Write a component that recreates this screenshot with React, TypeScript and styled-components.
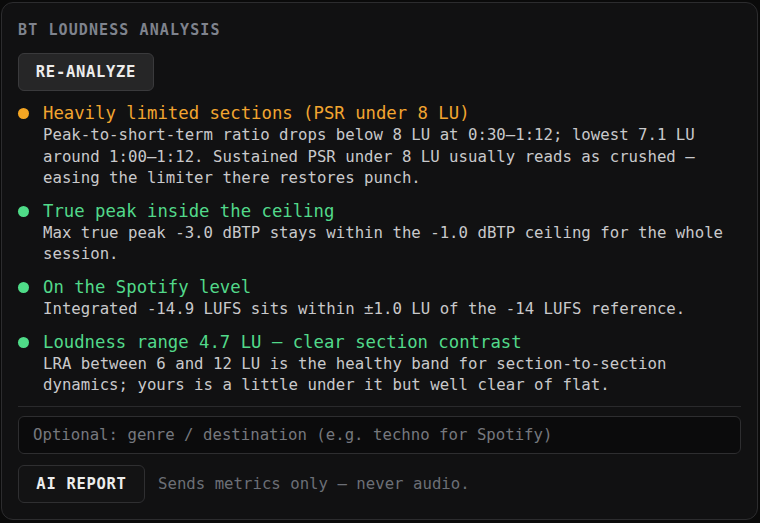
import React from "react";
import styled, { createGlobalStyle } from "styled-components";

const Global = createGlobalStyle`
  html, body { margin: 0; padding: 0; background: #0a0a0a; }
  body { font-family: "DejaVu Sans Mono", "Liberation Mono", monospace; }
  * { box-sizing: border-box; }
`;

const Panel = styled.div`
  margin: 2px 2px 3px 1px;
  width: 757px;
  height: 518px;
  border: 1px solid #2c2c2e;
  border-radius: 12px;
  background: #111112;
  padding: 18px 16px 0 16px;
  display: flex;
  flex-direction: column;
  overflow: hidden;
`;

const Title = styled.div`
  font-size: 15px;
  line-height: 18px;
  letter-spacing: 1.1px;
  color: #7f838d;
  font-weight: bold;
`;

const Button = styled.button<{ $dark?: boolean; $width: number }>`
  align-self: flex-start;
  width: ${(p) => p.$width}px;
  height: 38px;
  padding: 0;
  white-space: nowrap;
  border-radius: 6px;
  border: 1px solid ${(p) => (p.$dark ? "#2f2f31" : "#3a3a3c")};
  background: ${(p) => (p.$dark ? "#131314" : "#262627")};
  color: #ececec;
  font-family: "DejaVu Sans Mono", monospace;
  font-weight: bold;
  font-size: 15.5px;
  letter-spacing: 0.7px;
  cursor: pointer;
`;

const TopButton = styled(Button)`
  margin-top: 14px;
`;

const List = styled.div`
  margin-top: 11px;
  display: flex;
  flex-direction: column;
  gap: 11px;
`;

const Item = styled.div`
  display: grid;
  grid-template-columns: 25px 1fr;
`;

const Dot = styled.span<{ $color: string }>`
  width: 11px;
  height: 11px;
  border-radius: 50%;
  background: ${(p) => p.$color};
  margin: 6px 0 0 0;
`;

const Heading = styled.div<{ $color: string }>`
  font-size: 17.3px;
  line-height: 22px;
  color: ${(p) => p.$color};
`;

const Body = styled.div`
  grid-column: 2;
  font-size: 15.7px;
  line-height: 21.6px;
  color: #c9c9cb;
`;

const Separator = styled.div`
  margin-top: 10px;
  height: 1px;
  background: #2a2a2c;
`;

const Input = styled.input`
  margin-top: 9px;
  height: 38px;
  width: 100%;
  border: 1px solid #2e2e30;
  border-radius: 6px;
  background: #0b0b0c;
  padding: 0 14px;
  font-family: "DejaVu Sans Mono", monospace;
  font-size: 15.7px;
  color: #ddd;
  outline: none;
  &::placeholder { color: #76787e; }
`;

const Footer = styled.div`
  margin-top: 11px;
  display: flex;
  align-items: center;
  gap: 13px;
`;

const Note = styled.span`
  font-size: 15.7px;
  color: #6c6f76;
`;

const ORANGE = "#f2a530";
const GREEN = "#52d98a";

const items = [
  {
    color: ORANGE,
    dot: "#f5a623",
    title: "Heavily limited sections (PSR under 8 LU)",
    body: "Peak-to-short-term ratio drops below 8 LU at 0:30–1:12; lowest 7.1 LU around 1:00–1:12. Sustained PSR under 8 LU usually reads as crushed — easing the limiter there restores punch.",
  },
  {
    color: GREEN,
    dot: "#4fdc88",
    title: "True peak inside the ceiling",
    body: "Max true peak -3.0 dBTP stays within the -1.0 dBTP ceiling for the whole session.",
  },
  {
    color: GREEN,
    dot: "#4fdc88",
    title: "On the Spotify level",
    body: "Integrated -14.9 LUFS sits within ±1.0 LU of the -14 LUFS reference.",
  },
  {
    color: GREEN,
    dot: "#4fdc88",
    title: "Loudness range 4.7 LU — clear section contrast",
    body: "LRA between 6 and 12 LU is the healthy band for section-to-section dynamics; yours is a little under it but well clear of flat.",
  },
];

export default function App() {
  return (
    <>
      <Global />
      <Panel>
        <Title>BT LOUDNESS ANALYSIS</Title>
        <TopButton $width={136}>RE-ANALYZE</TopButton>
        <List>
          {items.map((it) => (
            <Item key={it.title}>
              <Dot $color={it.dot} />
              <Heading $color={it.color}>{it.title}</Heading>
              <Body>{it.body}</Body>
            </Item>
          ))}
        </List>
        <Separator />
        <Input placeholder="Optional: genre / destination (e.g. techno for Spotify)" />
        <Footer>
          <Button $dark $width={127}>AI REPORT</Button>
          <Note>Sends metrics only — never audio.</Note>
        </Footer>
      </Panel>
    </>
  );
}
